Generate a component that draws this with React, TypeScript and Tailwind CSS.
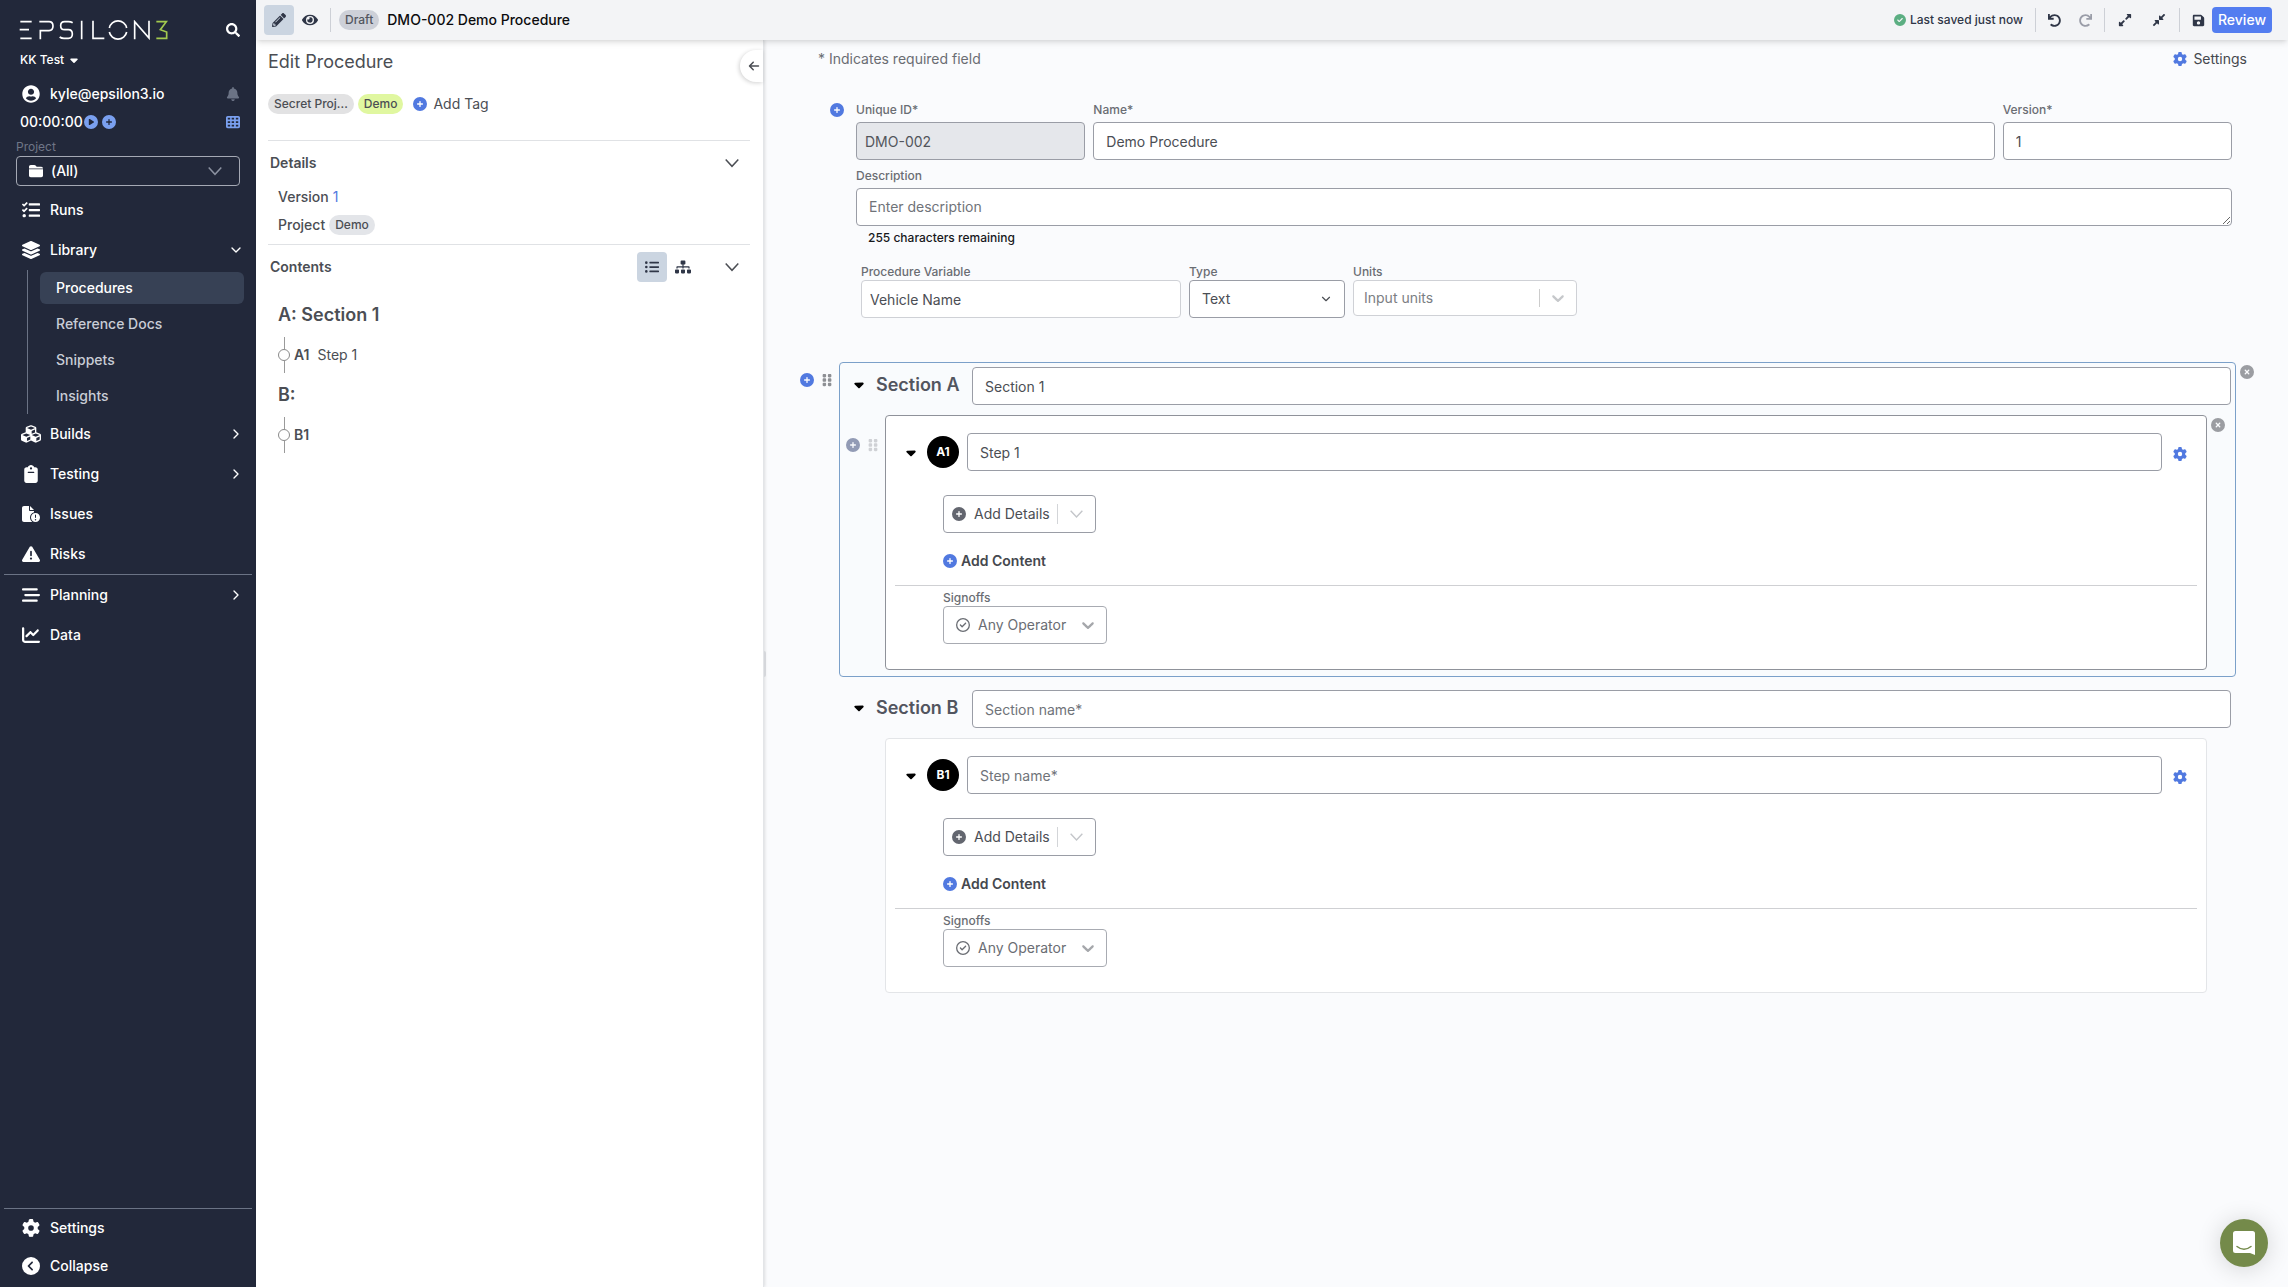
import React, { useState } from "react";
import {
  FaCubes,
  FaLayerGroup,
  FaTasks,
  FaPencilAlt,
  FaEye,
  FaExpandAlt,
  FaCompressAlt,
  FaSave,
  FaSearch,
  FaUserCircle,
  FaSitemap,
  FaListUl,
  FaUndo,
  FaRedo,
} from "react-icons/fa";
import {
  FaClipboard,
  FaFileCircleExclamation,
  FaTriangleExclamation,
  FaBarsStaggered,
  FaChartLine,
  FaGear,
  FaCircleChevronLeft,
  FaBell,
  FaCirclePlay,
  FaCirclePlus,
  FaCircleXmark,
  FaCircleCheck,
  FaRegCircleCheck,
  FaTableCells,
  FaFolderClosed,
  FaCaretDown,
  FaGripVertical,
  FaArrowLeft,
} from "react-icons/fa6";
import { ChevronDown, ChevronRight } from "lucide-react";

const fieldClass =
  "block h-[38px] w-full rounded-[4px] border border-[#9a9da6] bg-white px-3 text-sm text-[#4b4e54] placeholder-[#6f7379] outline-none";

function Logo() {
  return (
    <svg viewBox="58 60 450 60" className="h-5 w-[150px]" role="img" aria-label="Epsilon3" fill="none" stroke="#fff" strokeWidth="5">
      <path d="M62 65H96M60 89H88M62 115H96" />
      <path d="M119 65H148Q160 65 160 78T148 92H122V118" />
      <path d="M219 68Q214 65 206 65H195Q183 65 183 77T195 89H206Q218 89 218 102T206 115H193Q185 115 180 111" />
      <path d="M246 62V118M280 62V115H314" />
      <path d="M329 84A26.500 26.500 0 0 1 381 84M329 96A26.500 26.500 0 0 0 381 96" />
      <path d="M405 118V65L448 114V62" />
      <path stroke="#a3c94f" d="M470 65H500L482 89L501 96V115H470" />
    </svg>
  );
}

function ThickChevron({ className }: { className?: string }) {
  return (
    <svg viewBox="0 0 20 20" className={className} fill="currentColor" aria-hidden="true">
      <path d="M4.516 7.548c0.436-0.446 1.043-0.481 1.576 0l3.908 3.747 3.908-3.747c0.533-0.481 1.141-0.446 1.574 0 0.436 0.445 0.408 1.197 0 1.615-0.406 0.418-4.695 4.502-4.695 4.502-0.217 0.223-0.502 0.335-0.787 0.335s-0.57-0.112-0.789-0.335c0 0-4.287-4.084-4.695-4.502s-0.436-1.170 0-1.615z" />
    </svg>
  );
}

function WideChevron({ className }: { className?: string }) {
  return (
    <svg viewBox="0 0 14 14" className={className} fill="none" stroke="currentColor" strokeWidth="1.500" aria-hidden="true">
      <path d="M0.700 3.500L7 10.300L13.300 3.500" />
    </svg>
  );
}

function NavItem({ icon, label, open, compact }: { icon: React.ReactNode; label: string; open?: boolean; compact?: boolean }) {
  return (
    <a href="#" className={compact ? "flex h-[38px] items-center pl-[21px] pr-[12px]" : "flex h-10 items-center pl-[21px] pr-[12px]"}>
      <span className="flex w-5 justify-center">{icon}</span>
      <span className="ml-[9px] flex-1">{label}</span>
      {open === true && <ChevronDown size={16} />}
      {open === false && <ChevronRight size={16} />}
    </a>
  );
}

function Sidebar() {
  const library = ["Procedures", "Reference Docs", "Snippets", "Insights"];
  return (
    <aside className="flex w-64 shrink-0 flex-col bg-[#22283a] text-sm font-medium text-white">
      <div className="flex h-[50px] items-center justify-between pl-[19px] pr-4 pt-[10px]">
        <Logo />
        <button aria-label="Search">
          <FaSearch size={14} />
        </button>
      </div>
      <button className="flex h-5 items-center gap-1 self-start pl-5 text-xs">
        KK Test <FaCaretDown size={12} />
      </button>
      <div className="mt-[10px] flex h-7 items-center pl-[22px] pr-4">
        <FaUserCircle size={18} />
        <span className="ml-[10px] flex-1">kyle@epsilon3.io</span>
        <button aria-label="Notifications" className="text-[#6b7385]">
          <FaBell size={14} />
        </button>
      </div>
      <div className="flex h-7 items-center pl-5 pr-4">
        <span className="w-[60px]">00:00:00</span>
        <div className="flex flex-1 gap-1 pl-1 text-[#7aa0f0]">
          <button aria-label="Start timer">
            <FaCirclePlay size={14} />
          </button>
          <button aria-label="Add timer">
            <FaCirclePlus size={14} />
          </button>
        </div>
        <button aria-label="Table" className="text-[#7aa0f0]">
          <FaTableCells size={14} />
        </button>
      </div>
      <div className="px-4 pt-[3px]">
        <label htmlFor="project" className="block h-[17px] text-xs leading-4 font-normal text-[#6f7687]">
          Project
        </label>
        <button id="project" className="flex h-[30px] w-full items-center rounded-[4px] border border-[#a5a9b4] pl-3 pr-[17px]">
          <FaFolderClosed size={14} />
          <span className="ml-2 flex-1 text-left">(All)</span>
          <WideChevron className="h-[14px] w-[14px] text-[#8b91a0]" />
        </button>
      </div>
      <nav className="mt-1">
        <NavItem icon={<FaTasks size={18} />} label="Runs" />
        <NavItem icon={<FaLayerGroup size={18} />} label="Library" open />
        <div className="ml-[27px] flex flex-col gap-1 border-l border-[#6b7385] pt-[2px] pb-[2px] pl-3 pr-3">
          {library.map((l, i) => (
            <a
              key={l}
              href="#"
              className={
                i === 0
                  ? "flex h-8 items-center rounded-md bg-[#374155] pl-4"
                  : "flex h-8 items-center rounded-md pl-4 text-[#c9cdd6]"
              }
            >
              {l}
            </a>
          ))}
        </div>
        <NavItem icon={<FaCubes size={20} />} label="Builds" open={false} />
        <NavItem icon={<FaClipboard size={18} />} label="Testing" open={false} />
        <NavItem icon={<FaFileCircleExclamation size={18} className="shrink-0" />} label="Issues" />
        <NavItem icon={<FaTriangleExclamation size={18} />} label="Risks" />
        <hr className="mx-1 border-[#6b7385]" />
        <NavItem icon={<FaBarsStaggered size={18} />} label="Planning" open={false} />
        <NavItem icon={<FaChartLine size={18} />} label="Data" />
      </nav>
      <div className="mt-auto pb-[2px]">
        <hr className="mx-1 border-[#6b7385]" />
        <NavItem icon={<FaGear size={18} />} label="Settings" compact />
        <NavItem icon={<FaCircleChevronLeft size={18} />} label="Collapse" compact />
      </div>
    </aside>
  );
}

function Separator() {
  return <span className="h-6 w-px bg-[#cdd0d6]" />;
}

function TopBar() {
  return (
    <header className="z-10 flex h-10 shrink-0 items-center bg-[#f3f4f6] pl-2 pr-4 text-[#2f3647] shadow-md">
      <button aria-label="Edit" className="flex h-[30px] w-[30px] items-center justify-center rounded-[4px] bg-[#cbd5e1]">
        <FaPencilAlt size={14} />
      </button>
      <button aria-label="Preview" className="mr-3 ml-2">
        <FaEye size={16} />
      </button>
      <Separator />
      <span className="ml-2 flex h-5 items-center rounded-full bg-[#cdd0d8] px-[6px] text-xs font-medium text-[#52565f]">Draft</span>
      <h1 className="ml-2 flex-1 text-sm font-medium text-[#0c0c0e]">DMO-002 Demo Procedure</h1>
      <span className="mr-3 flex items-center gap-1 text-xs font-medium">
        <FaCircleCheck size={12} className="text-[#5bae82]" />
        Last saved just now
      </span>
      <Separator />
      <div className="flex gap-[18px] px-3">
        <button aria-label="Undo">
          <FaUndo size={13} />
        </button>
        <button aria-label="Redo" className="text-[#9a9da8]">
          <FaRedo size={13} />
        </button>
      </div>
      <Separator />
      <div className="flex gap-5 px-[13px]">
        <button aria-label="Expand all">
          <FaExpandAlt size={14} />
        </button>
        <button aria-label="Collapse all">
          <FaCompressAlt size={14} />
        </button>
      </div>
      <Separator />
      <button aria-label="Save" className="mr-[7px] ml-3">
        <FaSave size={13} />
      </button>
      <button className="h-[26px] rounded-[4px] bg-[#537df0] px-[6px] text-sm font-medium text-white">Review</button>
    </header>
  );
}

function ContentsSection({ title, step, name }: { title: string; step: string; name?: string }) {
  return (
    <li>
      <h3 className="flex h-11 items-center text-lg font-semibold">{title}</h3>
      <div className="flex h-9 items-center text-sm">
        <div className="flex w-3 flex-col items-center self-stretch">
          <span className="w-px flex-1 bg-[#9a9a9a]" />
          <span className="h-3 w-3 rounded-full border border-[#8a8a8a]" />
          <span className="w-px flex-1 bg-[#9a9a9a]" />
        </div>
        <span className="ml-1 font-semibold">{step}</span>
        <span className="ml-2">{name}</span>
      </div>
    </li>
  );
}

function Panel() {
  return (
    <section className="w-[508px] shrink-0 border-r border-[#e3e5e8] bg-white text-[#4b4e54] shadow-[1px_0_3px_rgba(0,0,0,0.12)]">
      <div className="flex h-[42px] items-end justify-between pl-3">
        <h2 className="mb-[6px] text-lg">Edit Procedure</h2>
        <button aria-label="Hide panel" className="flex h-8 w-[23px] items-center rounded-l-full bg-white pl-2 shadow-[-1px_1px_4px_rgba(0,0,0,0.18)]">
          <FaArrowLeft size={12} />
        </button>
      </div>
      <div className="flex h-[58px] items-start gap-1 pt-3 pl-3 text-xs font-medium">
        <span className="flex h-5 items-center rounded-full bg-[#e2e2e3] px-[6px]">Secret Proj...</span>
        <span className="flex h-5 items-center rounded-full bg-[#e0f7a0] px-[6px]">Demo</span>
        <button className="flex items-center gap-[6px] px-[6px] text-sm font-normal">
          <FaCirclePlus size={14} className="text-[#5179e0]" />
          Add Tag
        </button>
      </div>
      <div className="mr-[13px] ml-3">
        <div className="border-t border-[#e0e2e5]">
          <div className="flex h-11 items-center pr-[11px] pl-[2px]">
            <h3 className="flex-1 text-sm font-semibold">Details</h3>
            <button aria-label="Collapse details">
              <WideChevron className="h-[14px] w-[14px]" />
            </button>
          </div>
          <dl className="pb-[3px] pl-[10px] text-sm font-medium">
            <div className="flex h-6 items-center gap-1">
              <dt>Version</dt>
              <dd className="font-normal text-[#5179e0]">1</dd>
            </div>
            <div className="flex h-8 items-center gap-1">
              <dt>Project</dt>
              <dd className="flex h-5 items-center rounded-full bg-[#e3e5e9] px-[6px] text-xs">Demo</dd>
            </div>
          </dl>
        </div>
        <div className="border-t border-[#e0e2e5]">
          <div className="flex h-11 items-center pr-[11px] pl-[2px]">
            <h3 className="flex-1 text-sm font-semibold">Contents</h3>
            <button aria-label="List view" className="flex h-[30px] w-[30px] items-center justify-center rounded-[4px] bg-[#cbd5e1] text-[#2f3647]">
              <FaListUl size={14} />
            </button>
            <button aria-label="Tree view" className="mr-[34px] ml-2 text-[#2f3647]">
              <FaSitemap size={16} />
            </button>
            <button aria-label="Collapse contents">
              <WideChevron className="h-[14px] w-[14px]" />
            </button>
          </div>
          <ul className="pt-1 pl-[10px]">
            <ContentsSection title="A: Section 1" step="A1" name="Step 1" />
            <ContentsSection title="B:" step="B1" />
          </ul>
        </div>
      </div>
    </section>
  );
}

function Labelled({ id, label, className, tight, children }: { id: string; label: string; className?: string; tight?: boolean; children: React.ReactNode }) {
  return (
    <div className={className}>
      <label htmlFor={id} className={tight ? "block text-xs font-medium text-[#6a6d73]" : "mb-1 block text-xs font-medium text-[#6a6d73]"}>
        {label}
      </label>
      {children}
    </div>
  );
}

function ProcedureForm() {
  const [name, setName] = useState("Demo Procedure");
  const [version, setVersion] = useState("1");
  return (
    <div className="mt-[33px] flex items-start pr-[22px] pl-[30px]">
      <button aria-label="Add field" className="mt-[1px] mr-3 text-[#5179e0]">
        <FaCirclePlus size={14} />
      </button>
      <div className="flex-1">
        <div className="flex gap-2">
          <Labelled id="uid" label="Unique ID*" className="w-1/6 shrink-0">
            <input id="uid" readOnly value="DMO-002" className="block h-[38px] w-full rounded-[4px] border border-[#9a9da6] bg-[#e5e7eb] px-2 text-sm text-[#52555b]" />
          </Labelled>
          <Labelled id="name" label="Name*" className="flex-1">
            <input id="name" value={name} onChange={(e) => setName(e.target.value)} className={fieldClass} />
          </Labelled>
          <Labelled id="version" label="Version*" className="w-1/6 shrink-0">
            <input id="version" value={version} onChange={(e) => setVersion(e.target.value)} className={fieldClass} />
          </Labelled>
        </div>
        <Labelled id="desc" label="Description" className="mt-2">
          <textarea
            id="desc"
            placeholder="Enter description"
            className="block h-[38px] w-full resize rounded-[4px] border border-[#9a9da6] bg-white px-3 py-2 text-sm text-[#4b4e54] placeholder-[#6f7379]"
          />
        </Labelled>
        <p className="mt-1 ml-3 text-xs font-medium text-[#17181c]">255 characters remaining</p>
        <div className="mt-[18px] ml-[5px] flex gap-2">
          <Labelled id="variable" label="Procedure Variable" tight className="w-80">
            <input id="variable" defaultValue="Vehicle Name" className="block h-[38px] w-full rounded-[4px] border border-[#cfd1d6] bg-white px-2 text-sm text-[#4b4e54]" />
          </Labelled>
          <Labelled id="type" label="Type" tight className="w-[156px]">
            <div className="relative">
              <select id="type" className={fieldClass + " appearance-none"}>
                <option>Text</option>
              </select>
              <ChevronDown size={14} className="pointer-events-none absolute top-3 right-3 text-[#4b4e54]" />
            </div>
          </Labelled>
          <Labelled id="units" label="Units" tight className="w-56">
            <div className="flex h-9 items-center rounded-[4px] border border-[#cfd1d6] bg-white">
              <input id="units" placeholder="Input units" className="min-w-0 flex-1 pl-[10px] text-sm placeholder-[#7b7e83] outline-none" />
              <span className="h-[18px] w-px bg-[#cccccc]" />
              <ThickChevron className="mx-2 h-5 w-5 text-[#c6c8cb]" />
            </div>
          </Labelled>
        </div>
      </div>
    </div>
  );
}

function Gutter({ visible, muted }: { visible: boolean; muted?: boolean }) {
  if (!visible) return <div className="w-[39px] shrink-0" />;
  return (
    <div className="flex w-[39px] shrink-0 items-center gap-[6px] self-start">
      <button aria-label="Add" className={muted ? "text-[#929bb5]" : "text-[#5179e0]"}>
        <FaCirclePlus size={14} />
      </button>
      <button aria-label="Drag" className={muted ? "text-[#cfd1d5]" : "text-[#8d8f94]"}>
        <FaGripVertical size={14} />
      </button>
    </div>
  );
}

function StepCard({ code, name, active }: { code: string; name: string; active: boolean }) {
  return (
    <div
      className={
        active
          ? "min-w-0 flex-1 rounded-[4px] border border-[#8f929a] bg-white pt-[17px] pb-[25px]"
          : "min-w-0 flex-1 rounded-[4px] border border-[#e3e5e8] bg-white pt-[17px] pb-[25px]"
      }
    >
      <div className="flex items-center pr-[19px] pl-[18px]">
        <button aria-label={"Toggle step " + code} className="flex w-[14px] justify-center text-black">
          <FaCaretDown size={15} />
        </button>
        <span className="ml-[9px] flex h-8 w-8 items-center justify-center rounded-full bg-black text-xs font-bold text-white">{code}</span>
        <input aria-label={"Step name " + code} defaultValue={name} placeholder="Step name*" className={fieldClass + " ml-2 min-w-0 flex-1"} />
        <button aria-label="Step settings" className="ml-[11px] pt-1 text-[#5179e0]">
          <FaGear size={14} />
        </button>
      </div>
      <div className="pl-[57px]">
        <button className="mt-6 flex h-[38px] items-center rounded-[4px] border border-[#9a9da6] pr-3 pl-2 text-sm text-[#4b4e54]">
          <FaCirclePlus size={14} className="text-[#63666f]" />
          <span className="ml-2">Add Details</span>
          <span className="mr-3 ml-[7px] h-5 w-px bg-[#d3d5d8]" />
          <WideChevron className="h-[14px] w-[13px] text-[#c4c6ca]" />
        </button>
        <button className="mt-[18px] flex h-5 items-center gap-1 text-sm font-semibold text-[#45484e]">
          <FaCirclePlus size={14} className="text-[#5179e0]" />
          Add Content
        </button>
      </div>
      <hr className="mx-[9px] mt-[14px] border-[#cfd0d3]" />
      <div className="pt-1 pl-[57px]">
        <label htmlFor={"signoff-" + code} className="block text-xs font-medium text-[#6a6d73]">
          Signoffs
        </label>
        <button id={"signoff-" + code} className="flex h-[38px] items-center rounded-[4px] border border-[#a8abb2] pr-2 pl-3 text-sm text-[#6a6d73]">
          <FaRegCircleCheck size={14} />
          <span className="ml-2">Any Operator</span>
          <ThickChevron className="ml-3 h-5 w-5 text-[#a5a7ab]" />
        </button>
      </div>
    </div>
  );
}

function SectionBlock({ letter, name, step, stepName, active }: { letter: string; name: string; step: string; stepName: string; active: boolean }) {
  return (
    <div className="mb-2 flex">
      <div className="pt-[11px]">
        <Gutter visible={active} />
      </div>
      <div
        className={
          active
            ? "min-w-0 flex-1 rounded-[4px] border border-[#7ba0c9] bg-[#f9fbfd] pt-1 pb-[6px]"
            : "min-w-0 flex-1 rounded-[4px] border border-transparent pt-1 pb-[6px]"
        }
      >
        <div className="flex items-center pr-1 pl-[12px]">
          <button aria-label={"Toggle section " + letter} className="flex w-[14px] justify-center pb-1 text-black">
            <FaCaretDown size={15} />
          </button>
          <h2 className="ml-[10px] w-[96px] pb-[2px] text-lg font-semibold whitespace-nowrap text-[#52555f]">Section {letter}</h2>
          <input aria-label={"Section name " + letter} defaultValue={name} placeholder="Section name*" className={fieldClass + " min-w-0 flex-1"} />
        </div>
        <div className="mt-[10px] flex pl-[6px]">
          <div className="pt-[23px]">
            <Gutter visible={active} muted />
          </div>
          <StepCard code={step} name={stepName} active={active} />
          <div className="w-7 pt-[3px] pl-1">
            {active && (
              <button aria-label="Remove step" className="block text-[#9b9da2]">
                <FaCircleXmark size={14} />
              </button>
            )}
          </div>
        </div>
      </div>
      <div className="w-[18px] pt-[3px] pl-1">
        {active && (
          <button aria-label="Remove section" className="block text-[#9b9da2]">
            <FaCircleXmark size={14} />
          </button>
        )}
      </div>
    </div>
  );
}

export default function App() {
  return (
    <div className="flex min-h-screen bg-[#fafbfd] font-['Inter',sans-serif] antialiased">
      <Sidebar />
      <div className="flex min-w-0 flex-1 flex-col">
        <TopBar />
        <div className="flex flex-1">
          <Panel />
          <div aria-hidden="true" className="flex w-[2px] shrink-0 items-center">
            <span className="h-[26px] w-[2px] rounded-r bg-[#d5d7db]" />
          </div>
          <main className="min-w-0 flex-1 pr-[34px] pl-[34px]">
            <div className="flex items-center justify-between pt-[9px] pr-[7px] pl-[18px] text-sm text-[#6a6d73]">
              <p>* Indicates required field</p>
              <button className="flex items-center gap-[6px] text-[#45484e]">
                <FaGear size={14} className="text-[#5179e0]" />
                Settings
              </button>
            </div>
            <ProcedureForm />
            <div className="mt-11">
              <SectionBlock letter="A" name="Section 1" step="A1" stepName="Step 1" active />
              <SectionBlock letter="B" name="" step="B1" stepName="" active={false} />
            </div>
          </main>
        </div>
      </div>
      <button
        aria-label="Open chat"
        className="fixed right-5 bottom-5 z-20 flex h-12 w-12 items-center justify-center rounded-full bg-[#748a4a] shadow-[0_2px_24px_rgba(0,0,0,0.16)]"
      >
        <svg viewBox="0 0 22 24" className="h-6 w-[22px]" fill="none" aria-hidden="true">
          <path d="M2.500 0H19.500Q22 0 22 2.500V24L17 22H2.500Q0 22 0 19.500V2.500Q0 0 2.500 0Z" fill="#fff" />
          <path d="M4 15.500Q11 21 18 15.500" stroke="#748a4a" strokeWidth="1.500" strokeLinecap="round" />
        </svg>
      </button>
    </div>
  );
}
